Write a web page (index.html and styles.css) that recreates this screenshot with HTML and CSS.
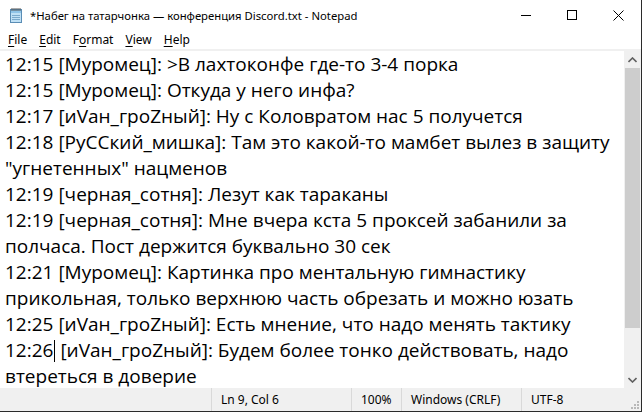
FILE: index.html
```html
<!DOCTYPE html>
<html>
<head>
  <title>Notepad</title>
  <link rel="stylesheet" href="styles.css">
</head>
<body>
  <div class="window">
    <div class="titlebar">
      <svg class="app-icon" width="16" height="16" viewBox="0 0 16 16">
        <rect x="2.5" y="2.5" width="11" height="13" fill="#bfe0f5" stroke="#5a8db5"/>
        <rect x="3" y="3" width="10" height="3" fill="#8fc4e8"/>
        <line x1="4" y1="8.5" x2="12" y2="8.5" stroke="#7aa9cc"/>
        <line x1="4" y1="10.5" x2="12" y2="10.5" stroke="#7aa9cc"/>
        <line x1="4" y1="12.5" x2="12" y2="12.5" stroke="#7aa9cc"/>
        <path d="M4 1v3M6 1v3M8 1v3M10 1v3M12 1v3" stroke="#555" stroke-width="1"/>
      </svg>
      <div class="title">*Набег на татарчонка — конференция Discord.txt - Notepad</div>
      <div class="controls">
        <div class="control">
          <svg width="10" height="10" viewBox="0 0 10 10"><line x1="0" y1="5.5" x2="10" y2="5.5" stroke="#000"/></svg>
        </div>
        <div class="control">
          <svg width="10" height="10" viewBox="0 0 10 10"><rect x="0.5" y="0.5" width="9" height="9" fill="none" stroke="#000"/></svg>
        </div>
        <div class="control">
          <svg width="11" height="11" viewBox="0 0 11 11"><path d="M0.5 0.5l10 10M10.5 0.5l-10 10" stroke="#000"/></svg>
        </div>
      </div>
    </div>

    <div class="menubar">
      <span class="menu-item"><u>F</u>ile</span>
      <span class="menu-item"><u>E</u>dit</span>
      <span class="menu-item">F<u>o</u>rmat</span>
      <span class="menu-item"><u>V</u>iew</span>
      <span class="menu-item"><u>H</u>elp</span>
    </div>

    <div class="editor">
      <div class="text">
        <div class="line">12:15 [Муромец]: &gt;В лахтоконфе где-то 3-4 порка</div>
        <div class="line">12:15 [Муромец]: Откуда у него инфа?</div>
        <div class="line">12:17 [иVан_гроZный]: Ну с Коловратом нас 5 получется</div>
        <div class="line">12:18 [РуССкий_мишка]: Там это какой-то мамбет вылез в защиту<br>"угнетенных" нацменов</div>
        <div class="line">12:19 [черная_сотня]: Лезут как тараканы</div>
        <div class="line">12:19 [черная_сотня]: Мне вчера кста 5 проксей забанили за<br>полчаса. Пост держится буквально 30 сек</div>
        <div class="line">12:21 [Муромец]: Картинка про ментальную гимнастику<br>прикольная, только верхнюю часть обрезать и можно юзать</div>
        <div class="line">12:25 [иVан_гроZный]: Есть мнение, что надо менять тактику</div>
        <div class="line">12:26<span class="caret"></span> [иVан_гроZный]: Будем более тонко действовать, надо<br>втереться в доверие</div>
      </div>
      <div class="scrollbar">
        <div class="arrow">
          <svg width="9" height="6" viewBox="0 0 9 6"><path d="M0.5 5L4.5 1L8.5 5" fill="none" stroke="#606060" stroke-width="1.6"/></svg>
        </div>
        <div class="track">
          <div class="thumb"></div>
        </div>
        <div class="arrow">
          <svg width="9" height="6" viewBox="0 0 9 6"><path d="M0.5 1L4.5 5L8.5 1" fill="none" stroke="#606060" stroke-width="1.6"/></svg>
        </div>
      </div>
    </div>

    <div class="statusbar">
      <div class="status-cell spacer"></div>
      <div class="status-cell pos">Ln 9, Col 6</div>
      <div class="status-cell zoom">100%</div>
      <div class="status-cell eol">Windows (CRLF)</div>
      <div class="status-cell enc">UTF-8</div>
      <svg class="grip" width="10" height="10" viewBox="0 0 10 10">
        <rect x="7" y="1" width="2" height="2" fill="#b8b8b8"/>
        <rect x="4" y="4" width="2" height="2" fill="#b8b8b8"/>
        <rect x="7" y="4" width="2" height="2" fill="#b8b8b8"/>
        <rect x="1" y="7" width="2" height="2" fill="#b8b8b8"/>
        <rect x="4" y="7" width="2" height="2" fill="#b8b8b8"/>
        <rect x="7" y="7" width="2" height="2" fill="#b8b8b8"/>
      </svg>
    </div>
  </div>
</body>
</html>
```

FILE: styles.css
```css
body {
  margin: 0;
  background: #ffffff;
  font-family: "Noto Sans", "Open Sans", sans-serif;
}

.window {
  width: 641px;
  height: 411px;
  border-right: 1px solid #2b2b2b;
  border-bottom: 1px solid #2b2b2b;
  display: flex;
  flex-direction: column;
  overflow: hidden;
}

.titlebar {
  height: 30px;
  display: flex;
  align-items: center;
  background: #ffffff;
}

.app-icon {
  margin-left: 8px;
  margin-right: 6px;
}

.title {
  flex: 1;
  font-size: 11.3px;
  color: #000;
  white-space: nowrap;
}

.controls {
  display: flex;
  height: 30px;
}

.control {
  width: 46px;
  height: 30px;
  display: flex;
  align-items: center;
  justify-content: center;
}

.menubar {
  height: 19px;
  display: flex;
  align-items: center;
  font-size: 12px;
  padding-left: 2px;
}

.menu-item {
  padding: 0 6px;
}

.menu-item u {
  text-underline-offset: 2px;
}

.editor {
  flex: 1;
  display: flex;
  border-top: 2px solid #f0f0f0;
  min-height: 0;
}

.text {
  flex: 1;
  padding: 0 0 0 5px;
  font-family: "Open Sans", "Noto Sans", sans-serif;
  font-size: 19px;
  line-height: 26px;
  color: #000;
  white-space: nowrap;
  overflow: hidden;
}

.caret {
  display: inline-block;
  width: 1px;
  height: 22px;
  background: #000;
  vertical-align: -5px;
  margin-left: 1px;
}

.scrollbar {
  width: 17px;
  background: #f0f0f0;
  display: flex;
  flex-direction: column;
}

.arrow {
  height: 17px;
  display: flex;
  align-items: center;
  justify-content: center;
}

.track {
  flex: 1;
  padding: 0 1px;
}

.thumb {
  height: 260px;
  background: #cdcdcd;
}

.statusbar {
  height: 23px;
  background: #f0f0f0;
  display: flex;
  align-items: center;
  font-size: 12px;
  position: relative;
}

.status-cell {
  height: 100%;
  display: flex;
  align-items: center;
  padding-left: 9px;
  border-left: 1px solid #d9d9d9;
  box-sizing: border-box;
}

.spacer {
  width: 211px;
  border-left: none;
}

.pos {
  width: 140px;
}

.zoom {
  width: 50px;
}

.eol {
  width: 120px;
}

.enc {
  flex: 1;
}

.grip {
  position: absolute;
  right: 1px;
  bottom: 1px;
}
```
